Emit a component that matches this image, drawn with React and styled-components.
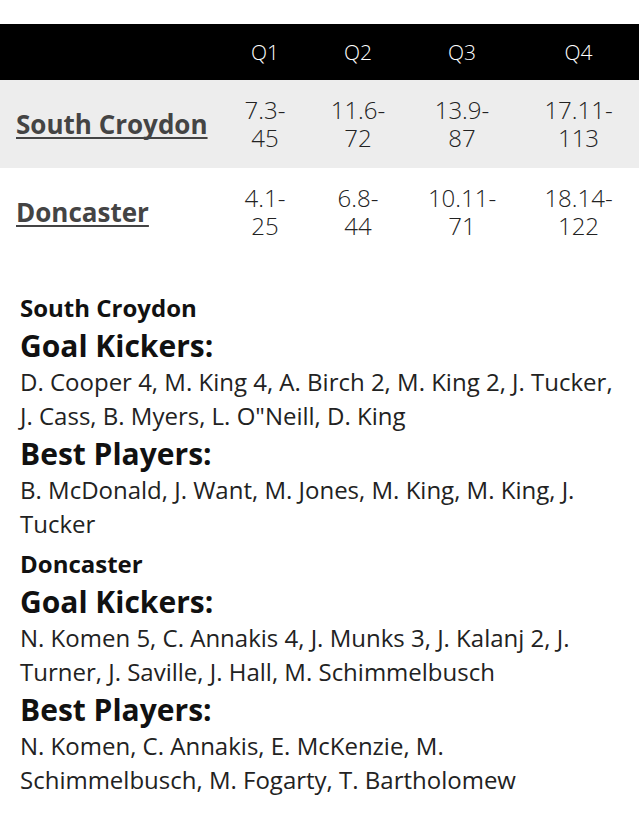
import React from 'react'
import styled, { createGlobalStyle } from 'styled-components'

const GlobalStyle = createGlobalStyle`
  body {
    margin: 0;
    background: #fff;
    font-family: "Open Sans", "Liberation Sans", sans-serif;
    color: #222;
  }
`

const Page = styled.div`
  padding-top: 24px;
  width: 639px;
`

const cols = '220px 90px 96px 112px 121px'

const HeadRow = styled.div`
  display: grid;
  grid-template-columns: ${cols};
  height: 56px;
  align-items: center;
  background: #000;
  color: #fff;
  font-size: 21px;
  font-weight: 300;
`

const Row = styled.div`
  display: grid;
  grid-template-columns: ${cols};
  height: 88px;
  align-items: center;
  background: ${p => (p.$shaded ? '#ededed' : '#fff')};
`

const Cell = styled.div`
  text-align: center;
`

const Score = styled(Cell)`
  font-size: 24px;
  font-weight: 300;
  line-height: 28px;
  color: #222;
`

const TeamLink = styled.a`
  padding-left: 16px;
  font-size: 26px;
  font-weight: 700;
  color: #444;
  text-decoration: underline;
  text-decoration-thickness: 2px;
  text-underline-offset: 3px;
  text-decoration-skip-ink: none;
  white-space: nowrap;
`

const Details = styled.div`
  padding: 35px 20px 20px;
`

const Team = styled.div`
  font-size: 24px;
  font-weight: 700;
  line-height: 34px;
  color: #111;
  margin-top: ${p => (p.$first ? '0' : '6px')};
`

const Label = styled.div`
  font-size: 30px;
  font-weight: 700;
  line-height: 38px;
  margin-top: 2px;
  color: #111;
`

const List = styled.div`
  font-size: 24px;
  line-height: 34px;
  color: #222;
`

const rows = [
  { team: 'South Croydon', scores: [['7.3-', '45'], ['11.6-', '72'], ['13.9-', '87'], ['17.11-', '113']] },
  { team: 'Doncaster', scores: [['4.1-', '25'], ['6.8-', '44'], ['10.11-', '71'], ['18.14-', '122']] },
]

const details = [
  {
    team: 'South Croydon',
    goals: 'D. Cooper 4, M. King 4, A. Birch 2, M. King 2, J. Tucker, J. Cass, B. Myers, L. O"Neill, D. King',
    best: 'B. McDonald, J. Want, M. Jones, M. King, M. King, J. Tucker',
  },
  {
    team: 'Doncaster',
    goals: 'N. Komen 5, C. Annakis 4, J. Munks 3, J. Kalanj 2, J. Turner, J. Saville, J. Hall, M. Schimmelbusch',
    best: 'N. Komen, C. Annakis, E. McKenzie, M. Schimmelbusch, M. Fogarty, T. Bartholomew',
  },
]

export default function App() {
  return (
    <Page>
      <GlobalStyle />
      <HeadRow>
        <div />
        <Cell>Q1</Cell>
        <Cell>Q2</Cell>
        <Cell>Q3</Cell>
        <Cell>Q4</Cell>
      </HeadRow>
      {rows.map((r, i) => (
        <Row key={r.team} $shaded={i === 0}>
          <div>
            <TeamLink href="#">{r.team}</TeamLink>
          </div>
          {r.scores.map(([a, b], j) => (
            <Score key={j}>
              {a}
              <br />
              {b}
            </Score>
          ))}
        </Row>
      ))}
      <Details>
        {details.map((d, i) => (
          <div key={d.team}>
            <Team $first={i === 0}>{d.team}</Team>
            <Label>Goal Kickers:</Label>
            <List>{d.goals}</List>
            <Label>Best Players:</Label>
            <List>{d.best}</List>
          </div>
        ))}
      </Details>
    </Page>
  )
}
